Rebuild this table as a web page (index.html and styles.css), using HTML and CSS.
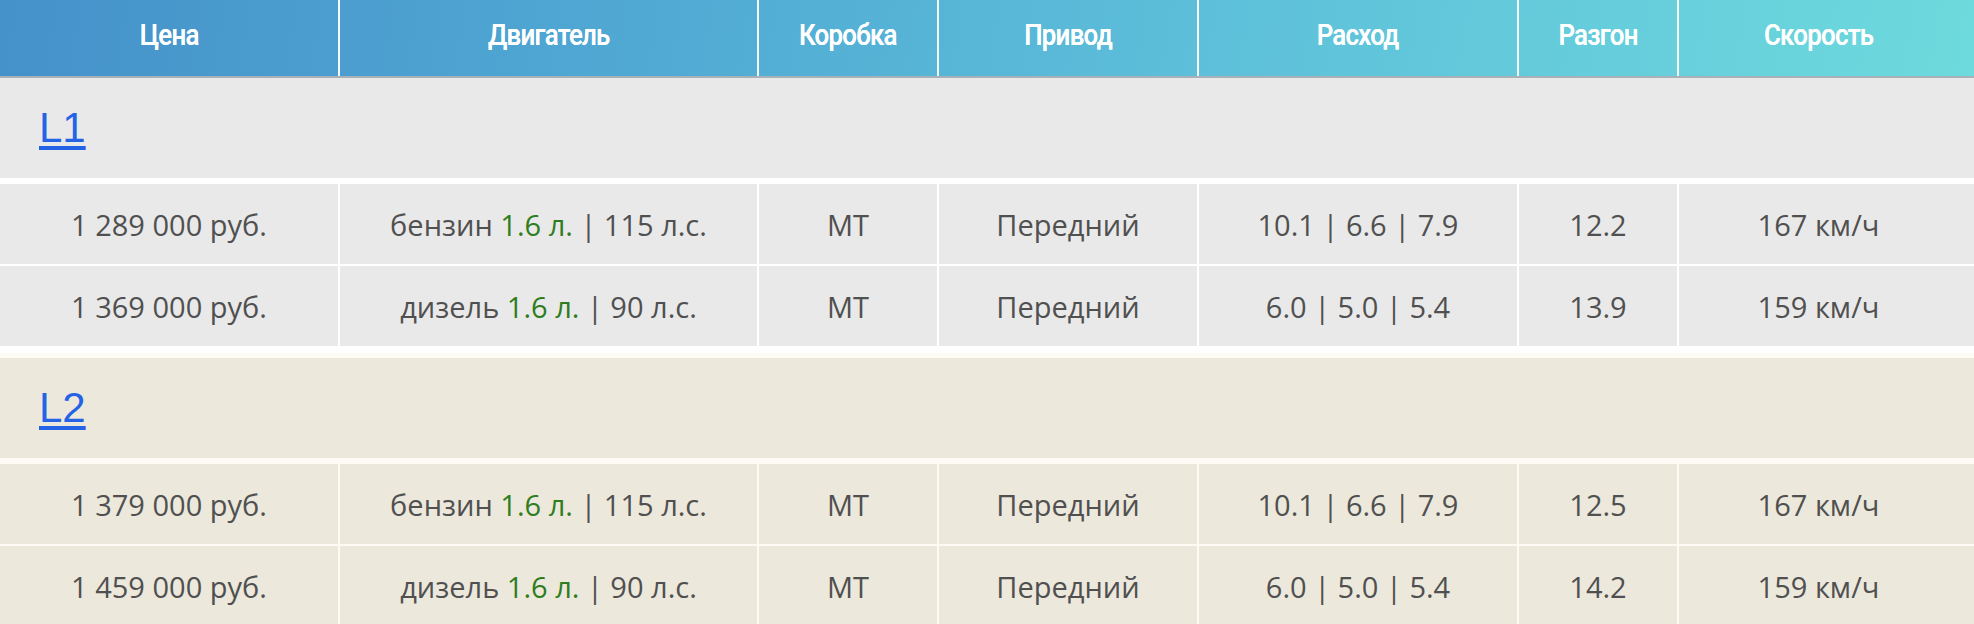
FILE: index.html
```html
<!DOCTYPE html>
<html lang="ru">
<head>
<meta charset="utf-8">
<title>Комплектации</title>
<link rel="stylesheet" href="styles.css">
</head>
<body>
<div class="specs">
  <div class="head">
    <div class="hcell"><span class="hlabel">Цена</span></div>
    <div class="hcell"><span class="hlabel">Двигатель</span></div>
    <div class="hcell"><span class="hlabel">Коробка</span></div>
    <div class="hcell"><span class="hlabel">Привод</span></div>
    <div class="hcell"><span class="hlabel">Расход</span></div>
    <div class="hcell"><span class="hlabel">Разгон</span></div>
    <div class="hcell"><span class="hlabel">Скорость</span></div>
  </div>

  <section class="group group-l1">
    <div class="group-head"><a href="#l1" class="trim">L1</a></div>
    <div class="row">
      <div class="cell">1 289 000 руб.</div>
      <div class="cell">бензин <span class="vol">1.6 л.</span> | 115 л.с.</div>
      <div class="cell">MT</div>
      <div class="cell">Передний</div>
      <div class="cell">10.1 | 6.6 | 7.9</div>
      <div class="cell">12.2</div>
      <div class="cell">167 км/ч</div>
    </div>
    <div class="row">
      <div class="cell">1 369 000 руб.</div>
      <div class="cell">дизель <span class="vol">1.6 л.</span> | 90 л.с.</div>
      <div class="cell">MT</div>
      <div class="cell">Передний</div>
      <div class="cell">6.0 | 5.0 | 5.4</div>
      <div class="cell">13.9</div>
      <div class="cell">159 км/ч</div>
    </div>
  </section>

  <section class="group group-l2">
    <div class="group-head"><a href="#l2" class="trim">L2</a></div>
    <div class="row">
      <div class="cell">1 379 000 руб.</div>
      <div class="cell">бензин <span class="vol">1.6 л.</span> | 115 л.с.</div>
      <div class="cell">MT</div>
      <div class="cell">Передний</div>
      <div class="cell">10.1 | 6.6 | 7.9</div>
      <div class="cell">12.5</div>
      <div class="cell">167 км/ч</div>
    </div>
    <div class="row">
      <div class="cell">1 459 000 руб.</div>
      <div class="cell">дизель <span class="vol">1.6 л.</span> | 90 л.с.</div>
      <div class="cell">MT</div>
      <div class="cell">Передний</div>
      <div class="cell">6.0 | 5.0 | 5.4</div>
      <div class="cell">14.2</div>
      <div class="cell">159 км/ч</div>
    </div>
  </section>
</div>
</body>
</html>
```

FILE: styles.css
```css
html, body {
  margin: 0;
  padding: 0;
  background: #ffffff;
}

body {
  font-family: "Open Sans", "DejaVu Sans", sans-serif;
  color: #505050;
}

.specs {
  width: 1974px;
  display: flex;
  flex-direction: column;
}

.head,
.row {
  display: grid;
  grid-template-columns: 340px 419px 180px 260px 320px 160px 295px;
}

.head {
  height: 76px;
  border-bottom: 2px solid #a6b2b8;
  background: linear-gradient(100deg, #4591ca 0%, #51abd4 35%, #5fc2da 65%, #6ddadd 100%);
}

.hcell {
  display: flex;
  align-items: center;
  justify-content: center;
  padding-bottom: 8px;
  border-right: 2px solid rgba(255, 255, 255, 0.95);
  color: #ffffff;
  font-family: "Roboto", "Liberation Sans", sans-serif;
  font-weight: 500;
  font-size: 30px;
  letter-spacing: -0.8px;
}

.hlabel {
  display: inline-block;
  transform: scaleX(0.86);
  text-shadow: 0 0 0.4px #ffffff;
}

.hcell:last-child,
.cell:last-child {
  border-right: none;
  padding-right: 16px;
}

.group {
  --gap: #ffffff;
  background: #e9e9e9;
  display: flex;
  flex-direction: column;
}

.group-l1 {
  margin-bottom: 7px;
}

.group-l2 {
  --gap: #fdfbf3;
  background: #ece8dc;
  border-top: 5px solid #fdfbf3;
}

.group-head {
  height: 100px;
  display: flex;
  align-items: center;
  padding-left: 39px;
  border-bottom: 6px solid var(--gap);
}

.trim {
  font-family: "Liberation Sans", Arial, sans-serif;
  font-size: 42px;
  color: #2563e6;
  text-decoration: underline;
  text-decoration-thickness: 4px;
  text-underline-offset: 4px;
  line-height: 1;
}

.row {
  height: 80px;
}

.row + .row {
  border-top: 2px solid var(--gap);
}

.cell {
  display: flex;
  align-items: center;
  justify-content: center;
  border-right: 2px solid var(--gap);
  font-size: 29px;
  white-space: pre;
}

.vol {
  color: #2f7d1c;
}
```
